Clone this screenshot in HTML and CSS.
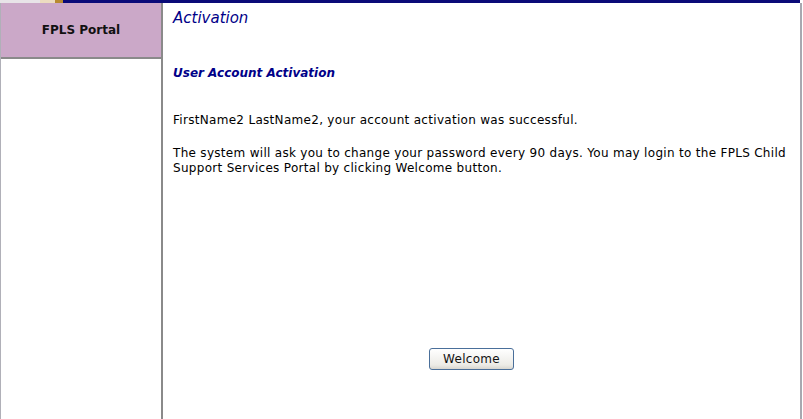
FILE: index.html
```html
<!DOCTYPE html>
<html>
<head>
<meta charset="utf-8">
<link rel="stylesheet" href="styles.css">
</head>
<body>
<div class="topbar">
  <span class="tb-a"></span><span class="tb-b"></span><span class="tb-c"></span><span class="tb-navy"></span>
</div>
<div class="frame">
  <aside class="sidebar">
    <div class="side-head">FPLS Portal</div>
  </aside>
  <main class="content">
    <h1 class="title">Activation</h1>
    <h2 class="subtitle">User Account Activation</h2>
    <p class="msg">FirstName2 LastName2, your account activation was successful.</p>
    <p class="msg">The system will ask you to change your password every 90 days. You may login to the FPLS Child Support Services Portal by clicking Welcome button.</p>
    <div class="actions">
      <button class="btn">Welcome</button>
    </div>
  </main>
</div>
</body>
</html>
```
FILE: styles.css
```css
html, body {
  margin: 0;
  padding: 0;
  background: #ffffff;
}
body {
  width: 803px;
  height: 419px;
  overflow: hidden;
  font-family: "DejaVu Sans", Verdana, sans-serif;
  font-size: 12px;
  color: #000;
}
.topbar {
  display: flex;
  height: 3px;
}
.tb-a { width: 40px; background: #e8e4e8; }
.tb-b { width: 15px; background: #ecdcc0; }
.tb-c { width: 8px; background: #b88a30; }
.tb-navy { width: 737px; background: #0a0a78; }
.frame {
  display: flex;
  height: 416px;
}
.sidebar {
  width: 160px;
  border-left: 1px solid #b0b0b8;
  border-right: 2px solid #8a8a8a;
  background: #fff;
}
.side-head {
  height: 54px;
  background: #cba8c8;
  border-bottom: 2px solid #8a8a8a;
  display: flex;
  align-items: center;
  justify-content: center;
  font-weight: bold;
  font-size: 12px;
  color: #111;
}
.content {
  width: 627px;
  padding: 0 0 0 10px;
  border-right: 2px solid #a8a8b0;
  display: flex;
  flex-direction: column;
}
.title {
  margin: 6px 0 0 0;
  font-size: 15px;
  font-weight: normal;
  font-style: italic;
  color: #000088;
  line-height: 18px;
}
.subtitle {
  margin: 39px 0 0 0;
  font-size: 12px;
  font-weight: bold;
  font-style: italic;
  color: #000088;
  line-height: 15px;
}
.msg {
  margin: 32px 0 0 0;
  line-height: 15px;
  letter-spacing: 0.3px;
}
.msg + .msg {
  margin-top: 18px;
}
.actions {
  margin-top: auto;
  margin-bottom: 49px;
  display: flex;
  justify-content: center;
  padding-right: 30px;
}
.btn {
  width: 85px;
  height: 22px;
  font-family: "DejaVu Sans", Verdana, sans-serif;
  font-size: 12px;
  letter-spacing: 0.3px;
  color: #111;
  border: 1px solid #4a6f9a;
  border-radius: 3px;
  background: linear-gradient(#ffffff, #ecebe6 80%, #d8d6cf);
  padding: 0;
}
```
